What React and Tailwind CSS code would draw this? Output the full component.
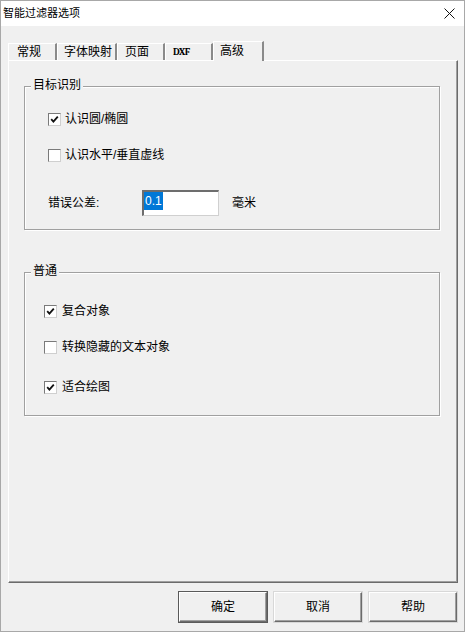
import React from "react";

const Check = ({ checked }) => (
  <span className="w-[13px] h-[13px] flex items-center justify-center bg-white border border-t-[#7a7a7a] border-l-[#7a7a7a] border-r-[#cfcfcf] border-b-[#cfcfcf] shrink-0">
    {checked && (
      <svg width="9" height="9" viewBox="0 0 9 9">
        <path d="M1.2 4.2 L3.4 6.6 L7.8 1.6" fill="none" stroke="#111" strokeWidth="1.8" />
      </svg>
    )}
  </span>
);

const CheckRow = ({ checked, label, gap, className }) => (
  <div className={`flex items-center h-[16px] ${className}`}>
    <Check checked={checked} />
    <span className={`${gap} text-[12px] leading-[16px]`}>{label}</span>
  </div>
);

const Group = ({ title, children, className }) => (
  <div
    className={`relative w-[416px] h-[144px] border border-[#a0a0a0] shadow-[inset_1px_1px_0_#fff,1px_1px_0_#fff] ${className}`}
  >
    {/* group caption sits on the border */}
    <span className="absolute -top-[9px] left-[6px] px-[2px] bg-[#f0f0f0] text-[12px] leading-[14px]">
      {title}
    </span>
    {children}
  </div>
);

const tabs = [
  { label: "常规", w: "w-[49px]", pl: "pl-[8px]" },
  { label: "字体映射", w: "w-[60px]", pl: "pl-[6px]" },
  { label: "页面", w: "w-[48px]", pl: "pl-[7px]" },
  { label: "DXF", w: "w-[48px]", pl: "pl-[7px]", mono: true },
];

const Button = ({ children, isDefault }) => (
  <button
    className={`w-[88px] h-[30px] bg-[#f0f0f0] text-[12px] flex items-center justify-center border border-t-white border-l-white border-r-[#6b6b6b] border-b-[#6b6b6b] ${
      isDefault
        ? "outline outline-1 outline-[#5a5a5a] shadow-[inset_-1px_-1px_0_#a0a0a0]"
        : "shadow-[inset_-1px_-1px_0_#a0a0a0,0_0_0_1px_#d8d8d8]"
    }`}
  >
    {children}
  </button>
);

export default function App() {
  return (
    <div className="w-[465px] h-[632px] flex flex-col border border-[#a8a8a8] bg-[#f0f0f0] text-black font-[family-name:'Liberation_Sans','Noto_Sans_CJK_SC',sans-serif]">
      {/* title bar */}
      <div className="h-[25px] bg-white flex items-center justify-between pl-[2px] pr-[9px]">
        <span className="text-[11px] leading-[14px] -mt-[1px]">智能过滤器选项</span>
        <svg width="11" height="11" viewBox="0 0 11 11" className="-mt-[1px]">
          <path d="M0.5 0.5 L10.5 10.5 M10.5 0.5 L0.5 10.5" stroke="#111" strokeWidth="1" />
        </svg>
      </div>

      <div className="flex-1 flex flex-col px-[7px] pt-[15px]">
        {/* tabs */}
        <div className="flex items-end h-[19px]">
          {tabs.map((t) =>
            t.mono ? (
              <div
                key={t.label}
                className="w-[48px] pl-[7px] h-[17px] flex items-center border-t border-l border-t-white border-l-white border-r-2 border-r-[#8a8a8a] leading-[14px] font-serif text-[10px] font-semibold tracking-[-0.3px]"
              >
                {t.label}
              </div>
            ) : (
              <div
                key={t.label}
                className={`${t.w} ${t.pl} h-[17px] flex items-center border-t border-l border-t-white border-l-white border-r-2 border-r-[#8a8a8a] leading-[14px] text-[12px]`}
              >
                {t.label}
              </div>
            )
          )}
          <div className="relative z-10 w-[51px] h-[20px] -mb-[1px] pl-[6px] pt-[1px] flex items-start bg-[#f0f0f0] border-t border-l border-t-white border-l-white border-r-2 border-r-[#8a8a8a] text-[12px] leading-[16px]">
            高级
          </div>
        </div>

        {/* tab page */}
        <div className="w-[450px] h-[523px] flex flex-col pl-[15px] border border-t-white border-l-white border-r-[#6b6b6b] border-b-[#6b6b6b] shadow-[inset_-1px_-1px_0_#a0a0a0]">
          <Group title="目标识别" className="mt-[25px]">
            <div className="flex flex-col pl-[23px] pt-[24px]">
              <CheckRow checked label="认识圆/椭圆" gap="ml-[4px]" />
              <CheckRow label="认识水平/垂直虚线" gap="ml-[4px]" className="mt-[20px]" />
              <div className="flex items-center mt-[27px]">
                <span className="w-[94px] text-[12px] leading-[16px]">错误公差:</span>
                <div className="w-[77px] h-[26px] bg-white border-t-2 border-l-2 border-t-[#6d6d6d] border-l-[#6d6d6d] border-r border-b border-r-[#d0d0d0] border-b-[#d0d0d0] flex items-start">
                  <span className="bg-[#0078d7] text-white text-[12px] leading-[18px] px-[1px]">0.1</span>
                </div>
                <span className="ml-[13px] text-[12px] leading-[16px]">毫米</span>
              </div>
            </div>
          </Group>

          <Group title="普通" className="mt-[42px]">
            <div className="flex flex-col pl-[19px] pt-[30px]">
              <CheckRow checked label="复合对象" gap="ml-[5px]" />
              <CheckRow label="转换隐藏的文本对象" gap="ml-[5px]" className="mt-[20px]" />
              <CheckRow checked label="适合绘图" gap="ml-[5px]" className="mt-[24px]" />
            </div>
          </Group>
        </div>

        {/* dialog buttons */}
        <div className="flex justify-end gap-[7px] mt-[9px]">
          <Button isDefault>确定</Button>
          <Button>取消</Button>
          <Button>帮助</Button>
        </div>
      </div>
    </div>
  );
}
